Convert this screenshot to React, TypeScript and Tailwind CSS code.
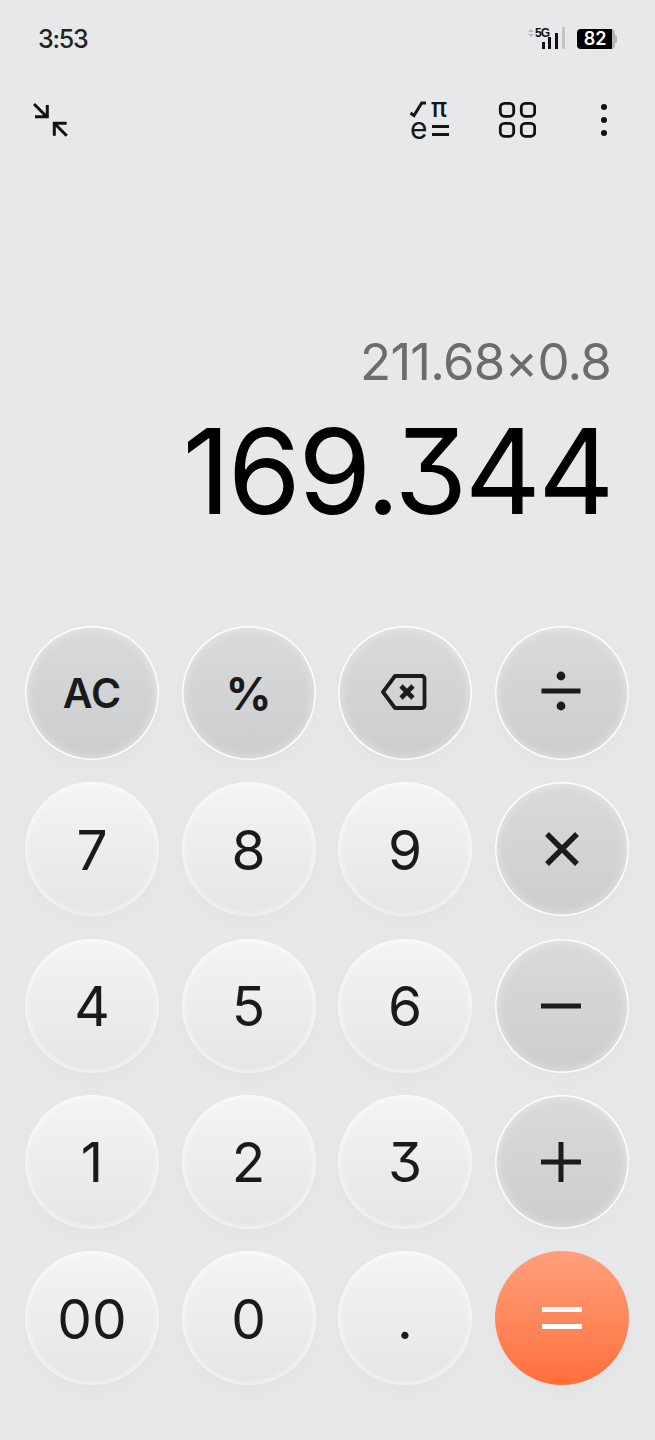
import React from 'react';

const fontStack = "font-['Inter','Liberation_Sans',sans-serif]";

const lightKey =
  'bg-gradient-to-b from-[#f4f4f4] to-[#e5e5e6] shadow-[inset_0_0_5px_2px_rgba(255,255,255,0.6),0_8px_16px_rgba(205,207,210,0.16)]';
const darkKey =
  'bg-gradient-to-b from-[#d9dadc] to-[#cccdcf] shadow-[inset_0_0_0_1.5px_rgba(255,255,255,0.95),inset_0_0_8px_3px_rgba(255,255,255,0.4),0_8px_16px_rgba(205,207,210,0.16)]';
const orangeKey =
  'bg-gradient-to-b from-[#ff9f7c] to-[#ff6f39] shadow-[0_8px_16px_rgba(205,207,210,0.16)]';

const BackspaceIcon = () => (
  <svg width="46" height="38" viewBox="0 0 46 38" fill="none" stroke="#1c1c1c" strokeWidth="3.8" strokeLinejoin="round" strokeLinecap="round" className="-translate-x-[1px] -translate-y-[1px]">
    <path d="M14 3h27a2.5 2.5 0 0 1 2.5 2.5v27a2.5 2.5 0 0 1-2.5 2.5H14L2 19z" />
    <path d="M20 13l12 12M32 13L20 25" strokeWidth="4.6" strokeLinecap="butt" />
  </svg>
);

const DivideIcon = () => (
  <svg width="40" height="40" viewBox="0 0 40 40" fill="#1c1c1c" className="-translate-x-[1px] -translate-y-[2px]">
    <circle cx="20" cy="5" r="4.4" />
    <rect x="0.5" y="17.5" width="39" height="5" />
    <circle cx="20" cy="35" r="4.4" />
  </svg>
);

const TimesIcon = () => (
  <svg width="34" height="34" viewBox="0 0 34 34" stroke="#1c1c1c" strokeWidth="5.4">
    <path d="M2 2l30 30M32 2L2 32" />
  </svg>
);

const MinusIcon = () => (
  <svg width="40" height="6" viewBox="0 0 40 6" fill="#1c1c1c" className="-translate-x-[1px]">
    <rect width="40" height="5" y="0.5" />
  </svg>
);

const PlusIcon = () => (
  <svg width="40" height="40" viewBox="0 0 40 40" fill="#1c1c1c" className="-translate-x-[1px]">
    <rect x="0" y="17.5" width="40" height="5" />
    <rect x="17.5" y="0" width="5" height="40" />
  </svg>
);

const EqualsIcon = () => (
  <svg width="40" height="24" viewBox="0 0 40 24" fill="#ffffff">
    <rect y="1" width="40" height="5" />
    <rect y="18" width="40" height="5" />
  </svg>
);

const ScientificIcon = () => (
  <svg width="42" height="40" viewBox="0 0 42 40" className="ml-auto overflow-visible">
    <path d="M1.5 13l3.5 2.5L12.7 3H17" fill="none" stroke="#151515" strokeWidth="3" />
    <text x="22" y="17" fontSize="26" fontWeight="500" fill="#151515" fontFamily="Inter">π</text>
    <text x="1" y="39" fontSize="30" fill="#151515" fontFamily="Inter">e</text>
    <rect x="23" y="25" width="17" height="3" fill="#151515" />
    <rect x="23" y="33" width="17" height="3" fill="#151515" />
  </svg>
);

const Key = ({ style, children }: { style: string; children: React.ReactNode }) => (
  <button className={`flex h-[134px] w-[134px] items-center justify-center rounded-full ${style}`}>
    {children}
  </button>
);

const Digit = ({ value }: { value: string }) => (
  <span className="pt-[2px] text-[55px] leading-none font-normal text-[#1a1a1a] [font-feature-settings:'cv09']">{value}</span>
);

export default function App() {
  return (
    <div className={`flex h-[1440px] w-[655px] flex-col overflow-hidden bg-[#e7e8e9] ${fontStack}`}>
      {/* Status bar */}
      <div className="flex h-[78px] items-center justify-between pr-[38px] pl-[38px]">
        <span className="text-[25px] leading-none font-medium tracking-[-1.2px] text-[#222]">3:53</span>
        <div className="flex items-center">
          <svg width="40" height="24" viewBox="0 0 40 24" className="mr-[11px]">
            <path d="M2 5l3-3 3 3z M2 7l3 3 3-3z" fill="#b9b9b9" />
            <text x="9" y="10" fontSize="12" fontWeight="700" fill="#111" fontFamily="Liberation Sans" textLength="15">5G</text>
            <rect x="16" y="15" width="3" height="7" fill="#111" />
            <rect x="22" y="10" width="3" height="12" fill="#111" />
            <rect x="29" y="6" width="3" height="16" fill="#111" />
            <rect x="36" y="0" width="3" height="22" fill="#c3c4c6" />
          </svg>
          <div className="flex items-center">
            <div className="flex h-[20px] w-[38px] items-center justify-center overflow-hidden rounded-[4px] bg-[linear-gradient(to_right,#000_92%,#b5b5b5_92%)] pr-[2px] text-[18px] leading-none font-semibold text-white">
              82
            </div>
            <div className="h-[8px] w-[2px] rounded-r-full bg-[#b5b5b5]" />
          </div>
        </div>
      </div>

      {/* Toolbar */}
      <div className="flex h-[84px] items-center pr-[47px] pl-[33px]">
        <svg width="36" height="36" viewBox="0 0 36 36" fill="none" stroke="#111" strokeWidth="3">
          <path d="M1 2l13.5 13.5M14.3 3v11.7H2" />
          <path d="M21.3 21.3l12.4 12.4M21.3 33.7V21.3h12.4" />
        </svg>
        <ScientificIcon />
        <svg width="38" height="38" viewBox="0 0 38 38" fill="none" stroke="#111" strokeWidth="2.8" className="ml-[47px]">
          <rect x="2.3" y="2.3" width="13.4" height="13" rx="4" />
          <rect x="23.3" y="2.3" width="13.4" height="13" rx="4" />
          <rect x="2.3" y="22.3" width="13.4" height="13" rx="4" />
          <rect x="23.3" y="22.3" width="13.4" height="13" rx="4" />
        </svg>
        <svg width="8" height="36" viewBox="0 0 8 36" fill="#111" className="ml-[64px]">
          <circle cx="4" cy="5" r="3" />
          <circle cx="4" cy="18" r="3" />
          <circle cx="4" cy="31" r="3" />
        </svg>
      </div>

      {/* Display */}
      <div className="flex h-[464px] flex-col items-end pt-[170px] pr-[44px]">
        <div className="text-[51px] leading-[60px] font-normal tracking-[-0.8px] text-[#6c6c6c]">211.68×0.8</div>
        <div className="mt-[14px] -mr-[1px] text-[118px] leading-[130px] font-normal tracking-[-2.6px] text-black [font-feature-settings:'cv09']">169.344</div>
      </div>

      {/* Keypad */}
      <div className="grid grid-cols-[repeat(4,134px)] gap-x-[22.5px] gap-y-[22.3px] pl-[25px]">
        <Key style={darkKey}><span className="text-[41px] leading-none font-semibold text-[#1a1a1a]">AC</span></Key>
        <Key style={darkKey}><span className="text-[45px] leading-none font-bold text-[#1a1a1a]">%</span></Key>
        <Key style={darkKey}><BackspaceIcon /></Key>
        <Key style={darkKey}><DivideIcon /></Key>

        <Key style={lightKey}><Digit value="7" /></Key>
        <Key style={lightKey}><Digit value="8" /></Key>
        <Key style={lightKey}><Digit value="9" /></Key>
        <Key style={darkKey}><TimesIcon /></Key>

        <Key style={lightKey}><Digit value="4" /></Key>
        <Key style={lightKey}><Digit value="5" /></Key>
        <Key style={lightKey}><Digit value="6" /></Key>
        <Key style={darkKey}><MinusIcon /></Key>

        <Key style={lightKey}><Digit value="1" /></Key>
        <Key style={lightKey}><Digit value="2" /></Key>
        <Key style={lightKey}><Digit value="3" /></Key>
        <Key style={darkKey}><PlusIcon /></Key>

        <Key style={lightKey}><Digit value="00" /></Key>
        <Key style={lightKey}><Digit value="0" /></Key>
        <Key style={lightKey}><Digit value="." /></Key>
        <Key style={orangeKey}><EqualsIcon /></Key>
      </div>
    </div>
  );
}
